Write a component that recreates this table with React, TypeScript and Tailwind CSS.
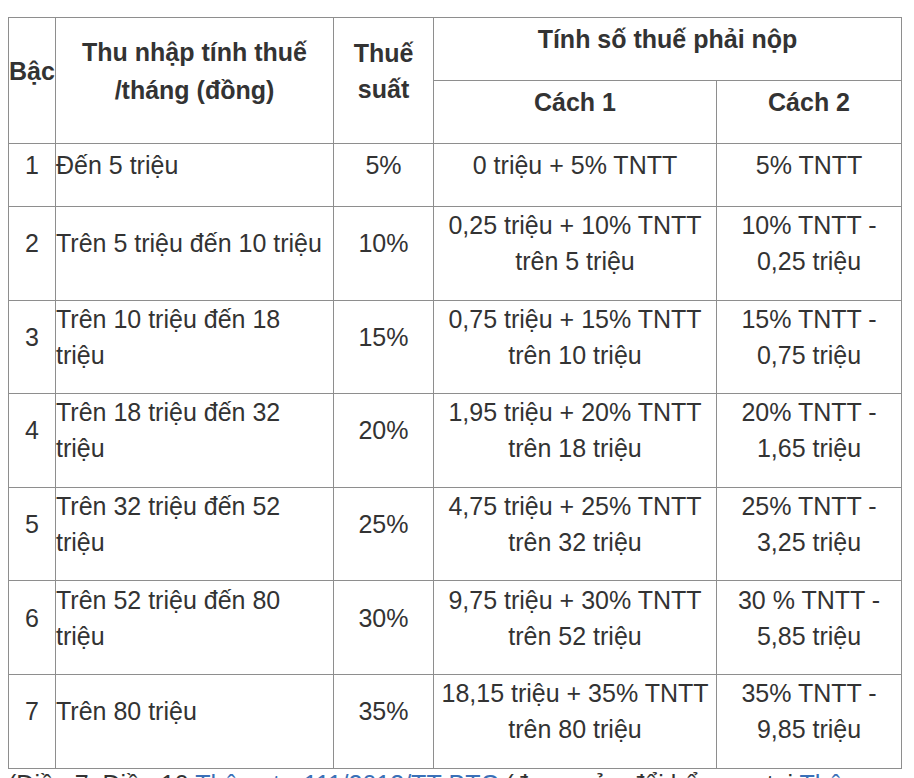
const rows = [
  { bac: '1', income: 'Đến 5 triệu', rate: '5%', c1: ['0 triệu + 5% TNTT'], c2: ['5% TNTT'] },
  { bac: '2', income: 'Trên 5 triệu đến 10 triệu', rate: '10%', c1: ['0,25 triệu + 10% TNTT', 'trên 5 triệu'], c2: ['10% TNTT -', '0,25 triệu'] },
  { bac: '3', income: 'Trên 10 triệu đến 18 triệu', rate: '15%', c1: ['0,75 triệu + 15% TNTT', 'trên 10 triệu'], c2: ['15% TNTT -', '0,75 triệu'] },
  { bac: '4', income: 'Trên 18 triệu đến 32 triệu', rate: '20%', c1: ['1,95 triệu + 20% TNTT', 'trên 18 triệu'], c2: ['20% TNTT -', '1,65 triệu'] },
  { bac: '5', income: 'Trên 32 triệu đến 52 triệu', rate: '25%', c1: ['4,75 triệu + 25% TNTT', 'trên 32 triệu'], c2: ['25% TNTT -', '3,25 triệu'] },
  { bac: '6', income: 'Trên 52 triệu đến 80 triệu', rate: '30%', c1: ['9,75 triệu + 30% TNTT', 'trên 52 triệu'], c2: ['30 % TNTT -', '5,85 triệu'] },
  { bac: '7', income: 'Trên 80 triệu', rate: '35%', c1: ['18,15 triệu + 35% TNTT', 'trên 80 triệu'], c2: ['35% TNTT -', '9,85 triệu'] },
];

const cell = 'border border-[#8e8e8e] p-0 pb-[20px] align-middle';

function Lines({ items }: { items: string[] }) {
  return (
    <>
      {items.map((t) => (
        <div key={t}>{t}</div>
      ))}
    </>
  );
}

export default function App() {
  return (
    <div
      className="min-h-screen bg-white pl-[8px] pt-[17px] text-[25px] leading-[36px] text-[#333333]"
      style={{ fontFamily: '"Liberation Sans", Arial, Helvetica, sans-serif' }}
    >
      <table className="w-[893px] table-fixed border-collapse">
        <colgroup>
          <col className="w-[47px]" />
          <col className="w-[278px]" />
          <col className="w-[100px]" />
          <col className="w-[283px]" />
          <col className="w-[185px]" />
        </colgroup>
        <thead>
          <tr className="h-[63px]">
            <th rowSpan={2} className={`${cell} text-left font-bold`}>
              Bậc
            </th>
            <th rowSpan={2} className={`${cell} font-bold leading-[38px]`}>
              <div>Thu nhập tính thuế</div>
              <div>/tháng (đồng)</div>
            </th>
            <th rowSpan={2} className={`${cell} font-bold`}>
              <div>Thuế</div>
              <div>suất</div>
            </th>
            <th colSpan={2} className={`${cell} font-bold`}>
              Tính số thuế phải nộp
            </th>
          </tr>
          <tr className="h-[63px]">
            <th className={`${cell} font-bold`}>Cách 1</th>
            <th className={`${cell} font-bold`}>Cách 2</th>
          </tr>
        </thead>
        <tbody>
          {rows.map((r) => (
            <tr key={r.bac} className={r.bac === '1' ? 'h-[63px]' : 'h-[93.6px]'}>
              <td className={`${cell} text-center`}>{r.bac}</td>
              <td className={`${cell} text-left`}>{r.income}</td>
              <td className={`${cell} text-center`}>{r.rate}</td>
              <td className={`${cell} text-center`}>
                <Lines items={r.c1} />
              </td>
              <td className={`${cell} text-center`}>
                <Lines items={r.c2} />
              </td>
            </tr>
          ))}
        </tbody>
      </table>
      <p className="w-[893px] leading-[30px]">
        (Điều 7, Điều 10{' '}
        <a className="text-[#3a70b8]">Thông tư 111/2013/TT-BTC</a> (được sửa đổi bổ sung tại{' '}
        <a className="text-[#3a70b8]">Thông tư 92/2015/TT-BTC</a>))
      </p>
    </div>
  );
}
